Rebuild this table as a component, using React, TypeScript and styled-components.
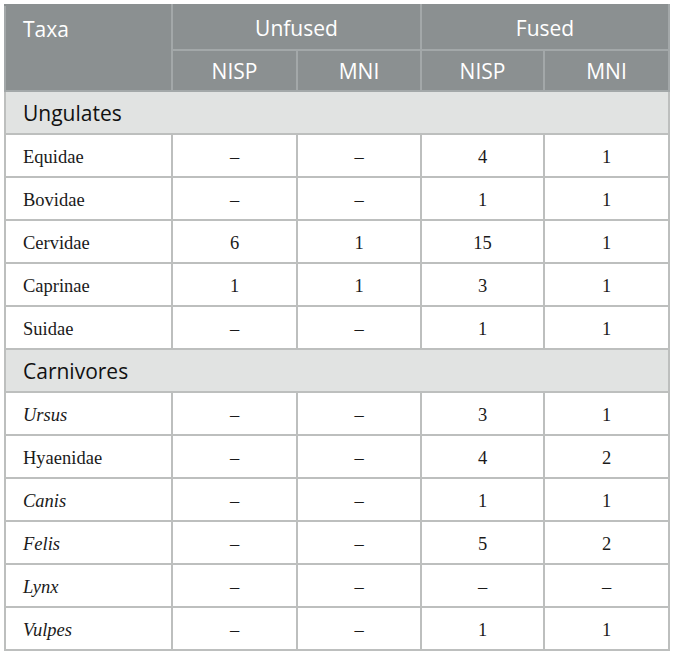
import React from "react";
import styled, { createGlobalStyle } from "styled-components";

const Global = createGlobalStyle`
  html, body { margin: 0; padding: 0; background: #ffffff; }
`;

const Page = styled.div`
  padding: 4px 5px 0 4px;
  width: 673px;
  box-sizing: border-box;
`;

const Table = styled.table`
  border-collapse: collapse;
  width: 664px;
  table-layout: fixed;
  border: 2px solid #bdbfbe;
`;

const HeadCell = styled.th<{ $align?: string; $top?: boolean }>`
  background: #8b9091;
  color: #ffffff;
  font-family: "Open Sans", "Liberation Sans", sans-serif;
  font-weight: 400;
  font-size: 21px;
  text-align: ${(p) => (p.$align ? p.$align : "center")};
  vertical-align: ${(p) => (p.$top ? "top" : "middle")};
  padding: ${(p) => (p.$top ? "9px 17px 0" : "0 8px")};
  border: 2px solid #a3a8a9;
  border-top-color: #8b9091;
  line-height: 28px;
`;

const SectionCell = styled.td`
  background: #e1e3e2;
  color: #111;
  font-family: "Open Sans", "Liberation Sans", sans-serif;
  font-size: 21px;
  padding: 0 17px;
  border: 2px solid #bdbfbe;
  height: 41px;
`;

const Cell = styled.td<{ $italic?: boolean; $left?: boolean }>`
  font-family: "Liberation Serif", "DejaVu Serif", serif;
  font-size: 18.5px;
  font-style: ${(p) => (p.$italic ? "italic" : "normal")};
  color: #1a1a1a;
  text-align: ${(p) => (p.$left ? "left" : "center")};
  padding: 3px ${(p) => (p.$left ? "17px" : "8px")} 0;
  border: 2px solid #bdbfbe;
  height: 38px;
`;

const HeadRow = styled.tr<{ $h: number }>`
  height: ${(p) => p.$h}px;
`;

type Row = { name: string; italic?: boolean; v: string[] };
type Section = { title: string; rows: Row[] };

const D = "–";

const data: Section[] = [
  {
    title: "Ungulates",
    rows: [
      { name: "Equidae", v: [D, D, "4", "1"] },
      { name: "Bovidae", v: [D, D, "1", "1"] },
      { name: "Cervidae", v: ["6", "1", "15", "1"] },
      { name: "Caprinae", v: ["1", "1", "3", "1"] },
      { name: "Suidae", v: [D, D, "1", "1"] },
    ],
  },
  {
    title: "Carnivores",
    rows: [
      { name: "Ursus", italic: true, v: [D, D, "3", "1"] },
      { name: "Hyaenidae", v: [D, D, "4", "2"] },
      { name: "Canis", italic: true, v: [D, D, "1", "1"] },
      { name: "Felis", italic: true, v: [D, D, "5", "2"] },
      { name: "Lynx", italic: true, v: [D, D, D, D] },
      { name: "Vulpes", italic: true, v: [D, D, "1", "1"] },
    ],
  },
];

export default function App() {
  return (
    <Page>
      <Global />
      <Table>
        <colgroup>
          <col style={{ width: 167 }} />
          <col style={{ width: 125 }} />
          <col style={{ width: 124 }} />
          <col style={{ width: 123 }} />
          <col style={{ width: 125 }} />
        </colgroup>
        <thead>
          <HeadRow $h={45}>
            <HeadCell rowSpan={2} $align="left" $top>
              Taxa
            </HeadCell>
            <HeadCell colSpan={2}>Unfused</HeadCell>
            <HeadCell colSpan={2}>Fused</HeadCell>
          </HeadRow>
          <HeadRow $h={41}>
            <HeadCell>NISP</HeadCell>
            <HeadCell>MNI</HeadCell>
            <HeadCell>NISP</HeadCell>
            <HeadCell>MNI</HeadCell>
          </HeadRow>
        </thead>
        <tbody>
          {data.map((s) => (
            <React.Fragment key={s.title}>
              <tr>
                <SectionCell colSpan={5}>{s.title}</SectionCell>
              </tr>
              {s.rows.map((r) => (
                <tr key={r.name}>
                  <Cell $left $italic={r.italic}>
                    {r.name}
                  </Cell>
                  {r.v.map((x, i) => (
                    <Cell key={i}>{x}</Cell>
                  ))}
                </tr>
              ))}
            </React.Fragment>
          ))}
        </tbody>
      </Table>
    </Page>
  );
}
